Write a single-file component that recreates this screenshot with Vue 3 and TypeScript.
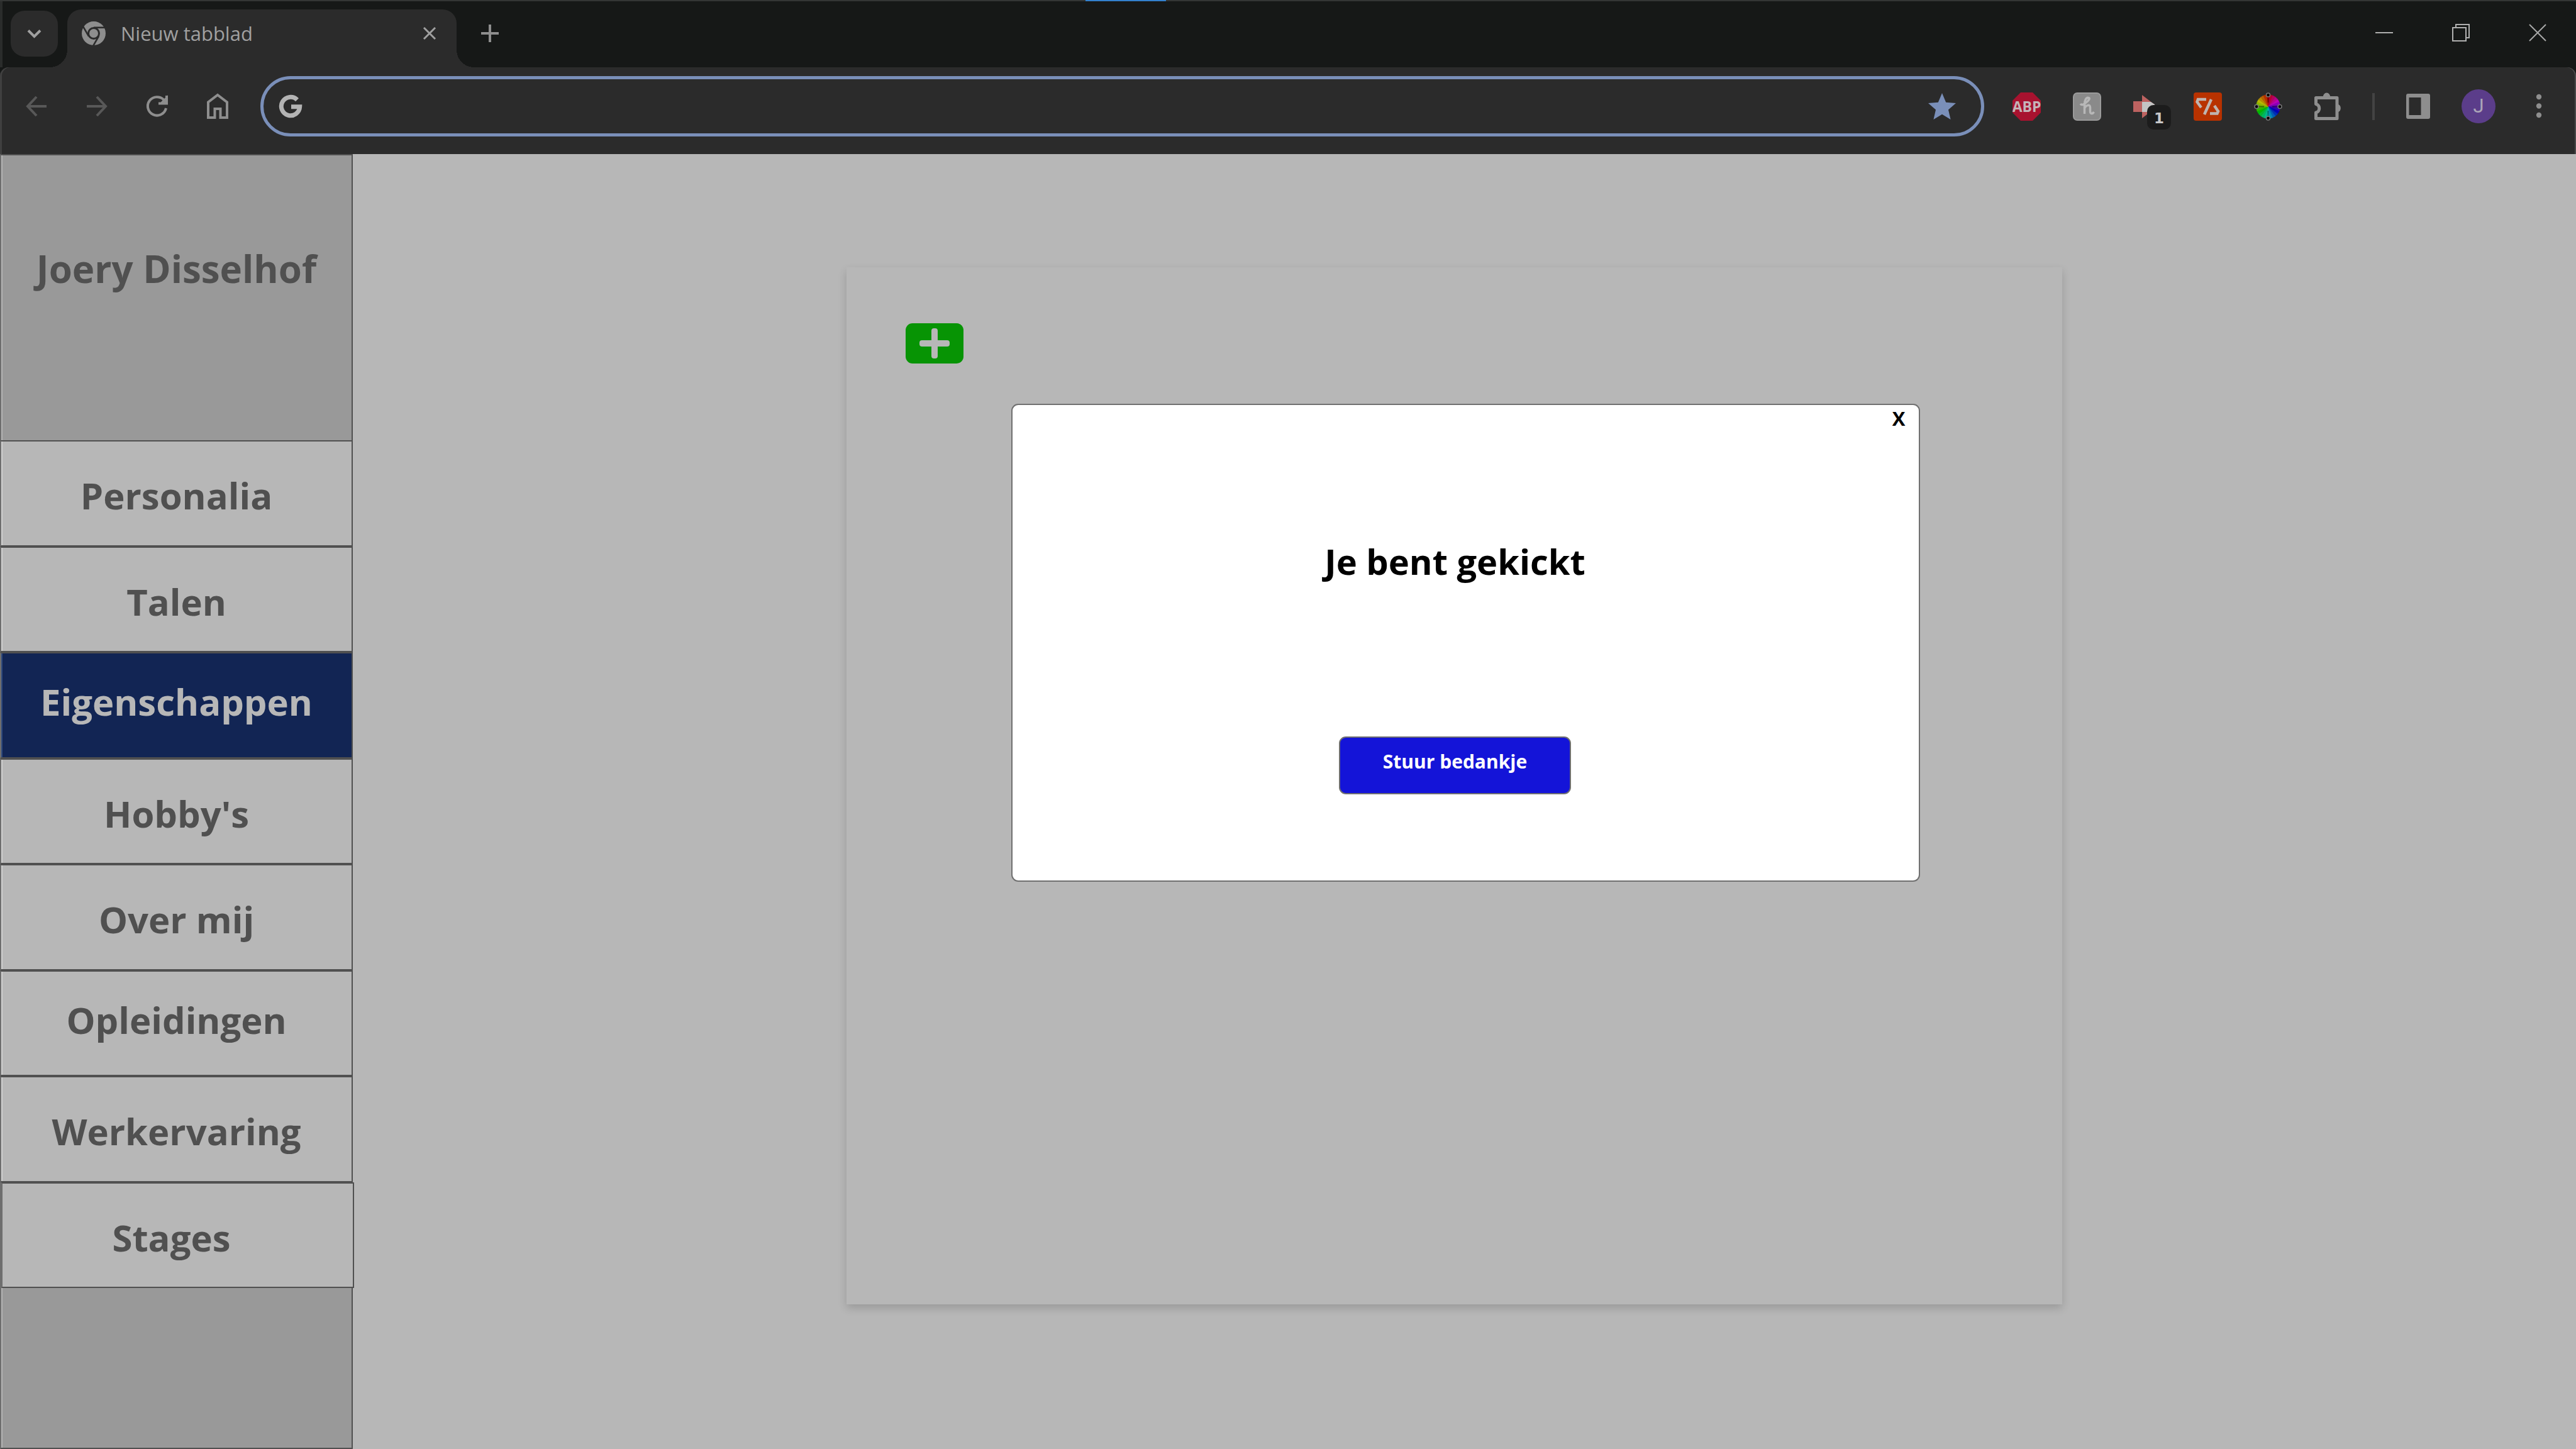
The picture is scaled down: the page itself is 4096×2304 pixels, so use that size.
<script setup lang="ts">
interface NavItem {
  label: string
  active?: boolean
  raised?: boolean
  shifted?: boolean
}

const navItems: NavItem[] = [
  { label: 'Personalia' },
  { label: 'Talen' },
  { label: 'Eigenschappen', active: true, raised: true },
  { label: "Hobby's" },
  { label: 'Over mij' },
  { label: 'Opleidingen', raised: true },
  { label: 'Werkervaring' },
  { label: 'Stages', shifted: true },
]

// Colour wheel wedges, clockwise from red at the top
const steps = 24
const wedges = Array.from({ length: steps }, (_, i) => {
  const point = (k: number) => {
    const a = ((k - 0.5) / steps) * Math.PI * 2
    return `${(22.5 + 19 * Math.sin(a)).toFixed(2)} ${(22.5 - 19 * Math.cos(a)).toFixed(2)}`
  }
  return {
    d: `M22.5 22.5L${point(i)}A19 19 0 0 1 ${point(i + 1)}Z`,
    fill: `hsl(${(360 - (i * 360) / steps) % 360} 100% 36%)`,
  }
})
const handles = [
  [22.5, 4],
  [41, 22.5],
  [22.5, 41],
  [4, 22.5],
]
</script>

<template>
  <div class="window">
    <header class="browser">
      <div class="strip">
        <button class="tab-search" aria-label="Tabbladen zoeken">
          <svg width="23" height="15" viewBox="0 0 23 15"><path d="M2 2.5L11.500 12L21 2.500" class="line" stroke="#a0a0a0" stroke-width="4" /></svg>
        </button>
        <div class="tab">
          <svg width="38" height="38" viewBox="0 0 38 38">
            <circle cx="19" cy="19" r="19" fill="#8e8e8e" />
            <circle cx="19" cy="19" r="10" fill="#2b2b2b" />
            <g stroke="#2b2b2b" stroke-width="2.600">
              <path d="M19 9.800H38" />
              <path d="M19 9.800H38" transform="rotate(120 19 19)" />
              <path d="M19 9.800H38" transform="rotate(240 19 19)" />
            </g>
            <circle cx="19" cy="19" r="7" fill="#8e8e8e" />
          </svg>
          <span class="tab-title">Nieuw tabblad</span>
          <button class="tab-close" aria-label="Tabblad sluiten">
            <svg width="22" height="22" viewBox="0 0 22 22"><path d="M2 2L20 20M20 2L2 20" class="line" stroke="#a0a0a0" stroke-width="3" /></svg>
          </button>
        </div>
        <button class="new-tab" aria-label="Nieuw tabblad openen">
          <svg width="28" height="28" viewBox="0 0 28 28"><path d="M14 0V28M0 14H28" class="line" stroke="#8e8e8e" stroke-width="4" /></svg>
        </button>
        <div class="controls">
          <button aria-label="Minimaliseren">
            <svg width="28" height="28" viewBox="0 0 28 28"><path d="M0 14H28" class="line" stroke="#b0b0b0" stroke-width="2" /></svg>
          </button>
          <button aria-label="Verkleinen">
            <svg width="28" height="28" viewBox="0 0 28 28"><path d="M1 6H22V27H1ZM6 5V1H27V22H23" class="line" stroke="#b0b0b0" stroke-width="2" /></svg>
          </button>
          <button aria-label="Venster sluiten">
            <svg width="28" height="28" viewBox="0 0 28 28"><path d="M1 1L27 27M27 1L1 27" class="line" stroke="#a8a8a8" stroke-width="2" /></svg>
          </button>
        </div>
        <div class="loading-mark"></div>
      </div>

      <div class="toolbar">
        <button class="tool" aria-label="Vorige">
          <svg width="34" height="34" viewBox="0 0 34 34"><path d="M33 17H3M17 2L3 17L17 32" class="line" stroke="#585858" stroke-width="4" /></svg>
        </button>
        <button class="tool" aria-label="Volgende">
          <svg width="34" height="34" viewBox="0 0 34 34"><path d="M1 17H31M17 2L31 17L17 32" class="line" stroke="#585858" stroke-width="4" /></svg>
        </button>
        <button class="tool" aria-label="Vernieuwen">
          <svg width="36" height="36" viewBox="0 0 36 36"><path d="M32 21A14.700 14.700 0 1 1 29 8.500L32 12M33 1V13.500H20M25 13L33 5V13Z" class="line" stroke="#8e8e8e" stroke-width="4" /></svg>
        </button>
        <button class="tool" aria-label="Startpagina">
          <svg width="36" height="42" viewBox="0 0 36 42"><path d="M3 39V14.500L18 3L33 14.500V39H22.500V25H13.500V39Z" class="line" stroke="#8e8e8e" stroke-width="4" /></svg>
        </button>

        <div class="omnibox">
          <svg width="38" height="38" viewBox="0 0 38 38"><path d="M29.500 8.700A14.700 14.700 0 1 0 33.700 19.700H20" class="line" stroke="#b4b4b4" stroke-width="7" /></svg>
          <input type="text" aria-label="Adresbalk" />
          <button class="bookmark" aria-label="Bladwijzer">
            <svg width="44" height="42" viewBox="2 2 20 19"><path d="M12 17.270 18.180 21l-1.640-7.030L22 9.240l-7.190-.61L12 2 9.190 8.630 2 9.240l5.460 4.730L5.820 21z" fill="#7a8fb9" /></svg>
          </button>
        </div>

        <button class="tool" aria-label="Adblock Plus">
          <svg width="45" height="45" viewBox="0 0 45 45">
            <path d="M13 0H32L45 13V32L32 45H13L0 32V13Z" fill="#a8122f" />
            <text x="22.500" y="31" text-anchor="middle" class="abp">ABP</text>
          </svg>
        </button>
        <button class="tool" aria-label="Honey">
          <svg width="45" height="45" viewBox="0 0 45 45">
            <rect x="1" y="1" width="43" height="43" rx="6" fill="#8a8a8a" stroke="#9a9a9a" stroke-width="2" />
            <path d="M12 18C14 21 18 19 21 16C25 13 28 9 25 8.500C21 7.500 18.500 13 18.500 19V34M18.500 25C21 20 27.500 18 27.500 24V30C27.500 34 31 35 33.500 31" class="line" stroke="#b8b8b8" stroke-width="3.500" />
          </svg>
        </button>
        <button class="tool badge-host" aria-label="Extensie, 1 melding">
          <svg width="45" height="37" viewBox="0 0 45 37">
            <path d="M0 10H14V0L38 18.500L14 37V27H0Z" fill="#bd6260" />
            <path d="M14 11H28L34 15V27H14Z" fill="#c4c4c4" />
          </svg>
          <span class="badge">1</span>
        </button>
        <button class="tool" aria-label="Kortingen">
          <svg width="45" height="45" viewBox="0 0 45 45">
            <rect width="45" height="45" rx="4" fill="#b83200" />
            <path d="M28 11L17 35M20 11H7L5.500 15L12 24M33 21L39 30L37.500 33.500H26" class="line" stroke="#bfb4b0" stroke-width="4.500" />
          </svg>
        </button>
        <button class="tool" aria-label="Kleurkiezer">
          <svg width="45" height="45" viewBox="0 0 45 45">
            <path v-for="w in wedges" :key="w.d" :d="w.d" :fill="w.fill" :stroke="w.fill" stroke-width="0.500" />
            <path d="M22.500 4V16M22.500 29V41M4 22.500H16M29 22.500H41" class="line" stroke="#000" stroke-opacity="0.400" stroke-width="2" />
            <circle v-for="h in handles" :key="h.join()" :cx="h[0]" :cy="h[1]" r="3" fill="#000" stroke="#777" stroke-width="1.500" />
          </svg>
        </button>
        <button class="tool" aria-label="Extensies">
          <svg width="45" height="47" viewBox="0 0 45 47">
            <path d="M2.500 19.500V9.500H36V42.500H2.500V33C9.500 31.500 9.500 21 2.500 19.500Z" class="line" stroke="#8e8e8e" stroke-width="5" stroke-linejoin="round" />
            <path d="M13.500 9A6 7.500 0 0 1 25.500 9ZM37 19.500A6.800 6.800 0 0 1 37 32.500Z" fill="#8e8e8e" />
          </svg>
        </button>
        <div class="divider"></div>
        <button class="tool" aria-label="Zijpaneel">
          <svg width="38" height="40" viewBox="0 0 38 40"><path fill-rule="evenodd" d="M3 0H35Q38 0 38 3V37Q38 40 35 40H3Q0 40 0 37V3Q0 0 3 0ZM4.500 6V34H23.500V6Z" fill="#8e8e8e" /></svg>
        </button>
        <button class="tool" aria-label="Profiel"><span class="avatar">J</span></button>
        <button class="tool" aria-label="Menu">
          <svg width="10" height="40" viewBox="0 0 10 40" fill="#8e8e8e"><circle cx="5" cy="5" r="4.200" /><circle cx="5" cy="19.500" r="4.200" /><circle cx="5" cy="34" r="4.200" /></svg>
        </button>
      </div>
    </header>

    <div class="page">
      <aside class="sidebar">
        <h1 class="owner">Joery Disselhof</h1>
        <nav class="nav">
          <a
            v-for="item in navItems"
            :key="item.label"
            href="#"
            class="nav-item"
            :class="{ active: item.active, raised: item.raised, shifted: item.shifted }"
            >{{ item.label }}</a
          >
        </nav>
      </aside>

      <main class="content">
        <section class="card">
          <button class="add" aria-label="Toevoegen">
            <svg width="48" height="48" viewBox="0 0 48 48" fill="#b7b7b7">
              <rect x="19" width="10" height="48" rx="4" />
              <rect y="19" width="48" height="10" rx="4" />
            </svg>
          </button>
          <div class="modal" role="dialog" aria-labelledby="modal-title">
            <button class="modal-close" aria-label="Sluiten">X</button>
            <h2 id="modal-title">Je bent gekickt</h2>
            <button class="thanks">Stuur bedankje</button>
          </div>
        </section>
      </main>
    </div>
  </div>
</template>

<style>
body {
  background: #b7b7b7;
}
</style>

<style scoped>
* {
  box-sizing: border-box;
}

.window {
  display: flex;
  flex-direction: column;
  min-height: 100vh;
  background: #b7b7b7;
  font-family: 'Open Sans', 'Noto Sans', sans-serif;
}

button {
  display: flex;
  align-items: center;
  justify-content: center;
  flex: none;
  padding: 0;
  border: 0;
  background: none;
  color: inherit;
  font-family: inherit;
}

svg {
  display: block;
  flex: none;
}

.line {
  fill: none;
}

/* Browser chrome */
.browser {
  background: #161817;
}

.strip {
  position: relative;
  display: flex;
  height: 107px;
  padding-left: 17px;
  border-top: 2px solid #343635;
  box-shadow: inset 4px 0 #2a2c2b;
}

.tab-search {
  width: 75px;
  height: 73px;
  margin-top: 15px;
  border-radius: 22px;
  background: #2b2b2b;
}

.tab {
  position: relative;
  display: flex;
  align-items: center;
  width: 619px;
  margin: 13px 0 0 15px;
  padding: 0 32px 16px 23px;
  border-radius: 22px 22px 0 0;
  background: #2b2b2b;
}

.tab::before,
.tab::after {
  content: '';
  position: absolute;
  bottom: 0;
  width: 28px;
  height: 28px;
}

.tab::before {
  right: 100%;
  background: radial-gradient(circle at 0 0, transparent 28px, #2b2b2b 28px);
}

.tab::after {
  left: 100%;
  background: radial-gradient(circle at 100% 0, transparent 28px, #2b2b2b 28px);
}

.tab-title {
  flex: 1;
  margin-left: 24px;
  color: #a0a0a0;
  font-size: 31px;
  line-height: 40px;
}

.new-tab {
  width: 74px;
  height: 74px;
  margin: 14px 0 0 16px;
}

.controls {
  display: flex;
  height: 100px;
  margin-left: auto;
}

.controls button {
  width: 122px;
}

.loading-mark {
  position: absolute;
  top: -2px;
  left: 42.14%;
  width: 128px;
  height: 2px;
  background: #3381cd;
}

.toolbar {
  display: flex;
  align-items: center;
  height: 138px;
  padding: 0 11px 14px 10px;
  border-radius: 14px 14px 0 0;
  background: #2b2b2b;
  box-shadow: inset 3px 0 #404040, inset -2px 0 #4a4a4a;
}

.tool {
  width: 96px;
  height: 74px;
}

.omnibox {
  display: flex;
  flex: 1;
  align-items: center;
  height: 96px;
  margin: 0 19px 0 20px;
  padding: 0 40px 0 24px;
  border: 5px solid #7a8fb9;
  border-radius: 48px;
}

.omnibox input {
  flex: 1;
  min-width: 0;
  height: 60px;
  padding: 0 20px;
  border: 0;
  outline: 0;
  background: none;
  color: #b4b4b4;
  font: 31px 'Open Sans', sans-serif;
}

.abp {
  fill: #c4b4b8;
  font: bold 23px 'Open Sans', sans-serif;
}

.badge-host {
  position: relative;
}

.badge {
  position: absolute;
  top: 35px;
  left: 48px;
  width: 38px;
  height: 39px;
  border-radius: 10px;
  background: #1c1c1c;
  color: #c8c8c8;
  font: bold 23px/42px 'DejaVu Sans', sans-serif;
  text-align: center;
}

.divider {
  width: 4px;
  height: 43px;
  margin: 0 21px 0 22px;
  background: #434343;
}

.avatar {
  width: 54px;
  height: 54px;
  border-radius: 50%;
  background: #5b3d8a;
  color: #aca4b8;
  font: 31px/54px Roboto, sans-serif;
}

/* Page */
.page {
  display: flex;
  flex: 1;
}

.sidebar {
  display: flex;
  flex-direction: column;
  flex: none;
  width: 561px;
  border: 2px solid #505050;
  border-left-color: #6e6e6e;
  background: #999;
  box-shadow: inset 2px 0 #b4b4b4;
}

.owner {
  height: 453px;
  margin: 0;
  padding-top: 140px;
  color: #505050;
  font-size: 60px;
  line-height: 80px;
  text-align: center;
}

.nav {
  display: grid;
  grid-auto-rows: 1fr;
  height: 1348px;
  margin: 0 -2px;
}

.nav-item {
  display: flex;
  align-items: center;
  justify-content: center;
  padding-top: 8px;
  border: 2px solid #505050;
  border-left-color: #6e6e6e;
  background: #b7b7b7;
  box-shadow: inset 2px 0 #d0d0d0;
  color: #505050;
  font-size: 58px;
  font-weight: 700;
  line-height: 80px;
  text-decoration: none;
}

.nav-item.active {
  background: #122554;
  box-shadow: inset 2px 0 #2e4a80;
  color: #b7b7b7;
}

.nav-item.raised {
  padding: 0 0 10px;
}

.nav-item.shifted {
  margin: 0 -2px 0 2px;
  padding-right: 20px;
  box-shadow: none;
}

.content {
  display: flex;
  flex: 1;
  padding: 180px 817px 230px 785px;
}

.card {
  position: relative;
  flex: 1;
  padding: 89px 94px;
  background: #b7b7b7;
  box-shadow: 0 6px 13px rgba(0, 0, 0, 0.16);
}

.add {
  width: 92px;
  height: 64px;
  border-radius: 11px;
  background: #079404;
}

.modal {
  position: absolute;
  top: 217px;
  left: 262px;
  right: 226px;
  display: flex;
  flex-direction: column;
  align-items: center;
  height: 760px;
  padding: 0 34px 0 0;
  border: 2px solid #707070;
  border-radius: 11px;
  background: #fff;
  color: #000;
}

.modal-close {
  align-self: flex-end;
  width: 36px;
  height: 42px;
  margin-right: -20px;
  font-size: 31px;
  font-weight: 700;
  line-height: 40px;
}

.modal h2 {
  margin: 166px 0 0;
  font-size: 56px;
  line-height: 80px;
}

.thanks {
  width: 369px;
  height: 92px;
  margin-top: 239px;
  padding-bottom: 12px;
  border: 2px solid #707070;
  border-radius: 11px;
  background: #1414d8;
  color: #fff;
  font-size: 30px;
  font-weight: 700;
  line-height: 40px;
}
</style>
